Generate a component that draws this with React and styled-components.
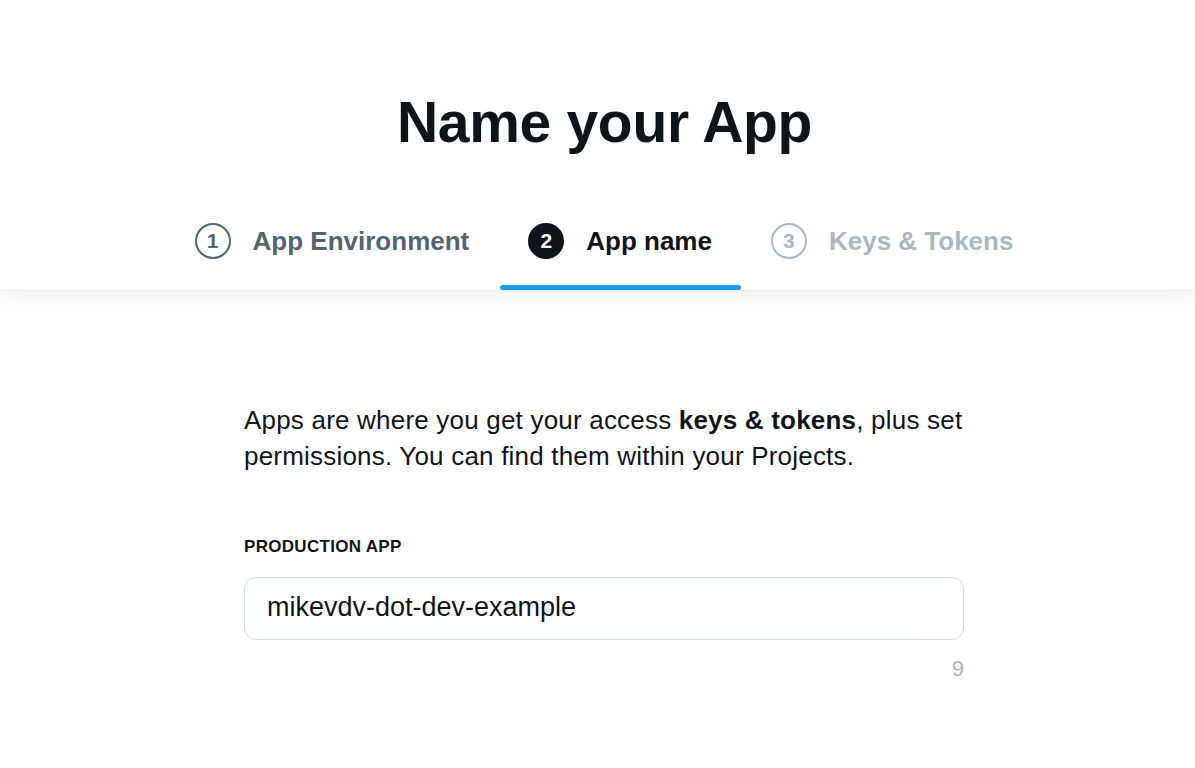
import React from "react";
import styled, { createGlobalStyle } from "styled-components";

const GlobalStyle = createGlobalStyle`
  html, body {
    margin: 0;
    padding: 0;
    background: #ffffff;
    font-family: "Liberation Sans", Arial, sans-serif;
    color: #0f1419;
  }
`;

const Page = styled.div`
  min-height: 768px;
  background: #ffffff;
`;

const Header = styled.header`
  background: #ffffff;
  padding: 86px 0 0 14px;
  box-shadow: 0 1px 0 rgba(0, 0, 0, 0.04), 0 6px 20px rgba(0, 0, 0, 0.06);
  position: relative;
  z-index: 1;
`;

const Title = styled.h1`
  margin: 0;
  text-align: center;
  font-size: 57px;
  line-height: 72px;
  font-weight: 700;
  letter-spacing: -0.3px;
  color: #0f1419;
`;

const Steps = styled.nav`
  display: flex;
  justify-content: center;
  gap: 2px;
  margin-top: 34px;
`;

const colors = {
  done: "#536471",
  active: "#0f1419",
  todo: "#aab8c2",
};

const Step = styled.div`
  position: relative;
  display: flex;
  align-items: center;
  gap: 22px;
  padding: 0 29px 0 28px;
  height: 98px;
  color: ${(p) => colors[p.$state]};
  font-size: 26px;
  font-weight: 700;

  &::after {
    content: "";
    display: ${(p) => (p.$state === "active" ? "block" : "none")};
    position: absolute;
    left: 0;
    right: 0;
    bottom: 0;
    height: 5px;
    border-radius: 3px;
    background: #1d9bf0;
  }
`;

const Bubble = styled.span`
  box-sizing: border-box;
  width: 36px;
  height: 36px;
  border-radius: 50%;
  display: flex;
  align-items: center;
  justify-content: center;
  font-size: 21px;
  font-weight: 700;
  border: 2px solid ${(p) => colors[p.$state]};
  background: ${(p) => (p.$state === "active" ? colors.active : "transparent")};
  color: ${(p) => (p.$state === "active" ? "#ffffff" : colors[p.$state])};
`;

const Body = styled.main`
  width: 720px;
  margin: 0 auto;
  padding: 112px 0 0 13px;
`;

const Intro = styled.p`
  margin: 0;
  font-size: 26px;
  line-height: 36px;
  letter-spacing: 0.2px;
  white-space: nowrap;
  color: #0f1419;

  b {
    font-weight: 700;
  }
`;

const Label = styled.label`
  display: block;
  margin-top: 63px;
  font-size: 17px;
  line-height: 20px;
  font-weight: 700;
  letter-spacing: 0.3px;
  color: #0f1419;
`;

const Field = styled.div`
  box-sizing: border-box;
  margin-top: 20px;
  height: 63px;
  border: 1.5px solid #cfd9de;
  border-radius: 12px;
  display: flex;
  align-items: center;
  padding: 0 22px 2px;
  font-size: 27px;
  color: #0f1419;
`;

const Counter = styled.div`
  margin-top: 14px;
  text-align: right;
  font-size: 22px;
  line-height: 30px;
  color: #a8b7c3;
`;

const steps = [
  { n: 1, label: "App Environment", state: "done" },
  { n: 2, label: "App name", state: "active" },
  { n: 3, label: "Keys & Tokens", state: "todo" },
];

export default function App() {
  return (
    <Page>
      <GlobalStyle />
      <Header>
        <Title>Name your App</Title>
        <Steps>
          {steps.map((s) => (
            <Step key={s.n} $state={s.state}>
              <Bubble $state={s.state}>{s.n}</Bubble>
              {s.label}
            </Step>
          ))}
        </Steps>
      </Header>
      <Body>
        <Intro>
          Apps are where you get your access <b>keys &amp; tokens</b>, plus set
          <br />
          permissions. You can find them within your Projects.
        </Intro>
        <Label>PRODUCTION APP</Label>
        <Field>mikevdv-dot-dev-example</Field>
        <Counter>9</Counter>
      </Body>
    </Page>
  );
}
